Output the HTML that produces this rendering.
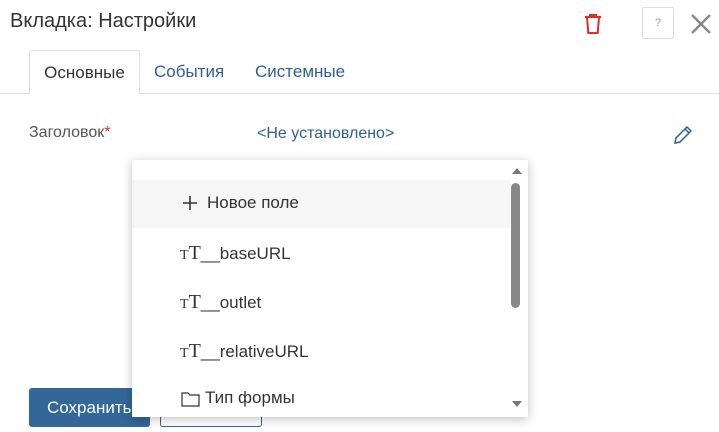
<!DOCTYPE html>
<html><head><meta charset="utf-8"><style>
*{box-sizing:border-box;margin:0;padding:0}
body{width:719px;height:432px;background:#fff;font-family:"Liberation Sans",sans-serif;position:relative;overflow:hidden;color:#333}
.a{position:absolute}
</style></head><body>
<div class="a" style="left:10px;top:10px;font-size:20px;color:#333">Вкладка: Настройки</div>
<svg class="a" style="left:583px;top:13px" width="20" height="22" viewBox="0 0 20 22"><path d="M2 4h16M7 4V2h6v2M4 4l1.3 16h9.4L16 4" fill="none" stroke="#d9302b" stroke-width="2"/></svg>
<div class="a" style="left:642px;top:7px;width:32px;height:32px;border:1px solid #ddd;border-radius:2px;font-size:11px;color:#999;text-align:center;line-height:30px">?</div>
<svg class="a" style="left:690px;top:13px" width="22" height="22"><path d="M2 2L20 20M20 2L2 20" stroke="#888" stroke-width="2.4"/></svg>
<div class="a" style="left:0;top:93px;width:719px;height:1px;background:#ddd"></div>
<div class="a" style="left:29px;top:50px;width:111px;height:44px;border:1px solid #ddd;border-bottom:none;border-radius:3px 3px 0 0;background:#fff;font-size:17px;color:#333;text-align:center;line-height:44px">Основные</div>
<div class="a" style="left:154px;top:62px;font-size:17px;color:#2e5f94">События</div>
<div class="a" style="left:255px;top:62px;font-size:17px;color:#2e5f94">Системные</div>
<div class="a" style="left:29px;top:124px;font-size:16px;color:#555">Заголовок<span style="color:#d9302b">*</span></div>
<div class="a" style="left:257px;top:125px;font-size:16px;color:#2e5f94">&lt;Не установлено&gt;</div>
<svg class="a" style="left:672px;top:124px" width="20" height="22"><path d="M3 19l1-5L15 3l4 4L8 18zM13 5l4 4" fill="none" stroke="#2e5f94" stroke-width="1.5"/></svg>
<div class="a" style="left:29px;top:388px;width:121px;height:39px;background:#336699;border-radius:3px;color:#fff;font-size:17px;line-height:39px;padding-left:18px">Сохранить</div>
<div class="a" style="left:160px;top:388px;width:102px;height:39px;border:1px solid #336699;border-radius:3px"></div>
<div class="a" style="left:132px;top:160px;width:396px;height:257px;background:#fff;box-shadow:0 2px 10px rgba(0,0,0,.25)">
<div class="a" style="left:0;top:20px;width:378px;height:48px;background:#f6f6f6"></div>
<svg class="a" style="left:51px;top:36px" width="14" height="14"><path d="M7 0v14M0 7h14" stroke="#333" stroke-width="1.6"/></svg>
<div class="a" style="left:75px;top:33px;font-size:17px;color:#333">Новое поле</div>
<div class="a" style="left:48px;top:82px;font-size:17px;color:#333"><span style="font-family:'Liberation Serif',serif;font-size:14px">T</span><span style="font-family:'Liberation Serif',serif;font-size:20px">T</span>__baseURL</div>
<div class="a" style="left:48px;top:131px;font-size:17px;color:#333"><span style="font-family:'Liberation Serif',serif;font-size:14px">T</span><span style="font-family:'Liberation Serif',serif;font-size:20px">T</span>__outlet</div>
<div class="a" style="left:48px;top:180px;font-size:17px;color:#333"><span style="font-family:'Liberation Serif',serif;font-size:14px">T</span><span style="font-family:'Liberation Serif',serif;font-size:20px">T</span>__relativeURL</div>
<svg class="a" style="left:49px;top:231px" width="20" height="16"><path d="M1 2h6l2 2h9v11H1z" fill="none" stroke="#333" stroke-width="1.2"/></svg>
<div class="a" style="left:73px;top:228px;font-size:17px;color:#333">Тип формы</div>
<div class="a" style="left:380px;top:8px;width:0;height:0;border:5px solid transparent;border-bottom:6px solid #777;border-top:none"></div>
<div class="a" style="left:380px;top:241px;width:0;height:0;border:5px solid transparent;border-top:6px solid #777;border-bottom:none"></div>
<div class="a" style="left:379px;top:23px;width:9px;height:125px;background:#888;border-radius:5px"></div>
</div>
</body></html>
